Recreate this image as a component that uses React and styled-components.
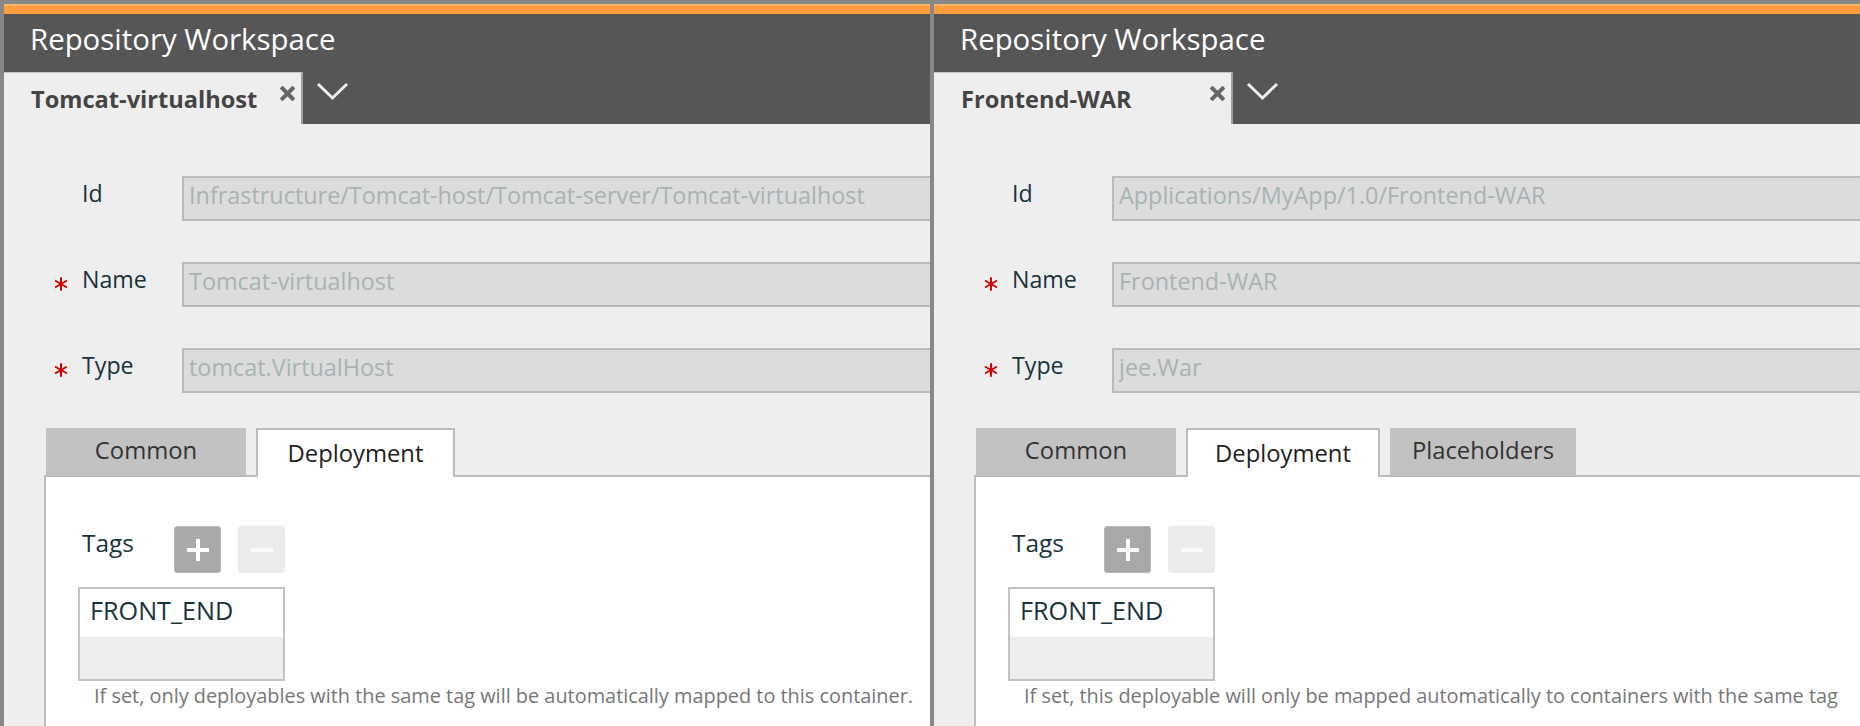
import React from "react";
import styled, { createGlobalStyle } from "styled-components";

const GlobalStyle = createGlobalStyle`
  html, body {
    margin: 0;
    padding: 0;
    background: #888888;
  }
  * {
    box-sizing: border-box;
  }
`;

const FONT = `"Open Sans", "Liberation Sans", sans-serif`;

const Page = styled.div`
  display: flex;
  width: 1860px;
  height: 726px;
  overflow: hidden;
  background: #888888;
  font-family: ${FONT};
`;

// One repository workspace window
const Panel = styled.section`
  flex: 0 0 930px;
  display: flex;
  flex-direction: column;
  border-left: 4px solid #888888;
  border-top: 4px solid #888888;
  background: #eeeeee;
  overflow: hidden;
  min-width: 0;
`;

const Accent = styled.div`
  height: 10px;
  flex: 0 0 auto;
  background: #ff9d3a;
  border-top: 2px solid #ffb76e;
`;

const Header = styled.header`
  flex: 0 0 110px;
  display: flex;
  flex-direction: column;
  background: #565656;
`;

const Title = styled.div`
  height: 58px;
  padding: 5px 0 0 26px;
  font-size: 29.4px;
  line-height: 40px;
  color: #ffffff;
  white-space: nowrap;
`;

const DocTabs = styled.div`
  display: flex;
  height: 52px;
`;

const DocTab = styled.div`
  width: 299px;
  height: 52px;
  display: flex;
  align-items: flex-start;
  padding: 0 6px 0 27px;
  background: #eeeeee;
  border-top: 1px solid #c6c6c6;
  border-right: 2px solid #9e9e9e;
`;

const DocTabLabel = styled.span`
  margin-top: 8px;
  font-size: 23.6px;
  line-height: 36px;
  font-weight: 700;
  color: #444444;
  white-space: nowrap;
`;

const CloseIcon = styled.svg`
  margin: 13px 0 0 auto;
  flex: 0 0 auto;
`;

const Chevron = styled.svg`
  margin: 10px 0 0 13px;
  flex: 0 0 auto;
`;

const Body = styled.div`
  flex: 1;
  display: flex;
  flex-direction: column;
  padding-top: 52px;
  min-height: 0;
`;

const FieldRow = styled.div`
  display: flex;
  align-items: center;
  height: 45px;
  margin-bottom: ${({ last }) => (last ? "35px" : "41px")};
  padding-left: 50px;
`;

const Required = styled.span`
  flex: 0 0 28px;
  display: flex;
  align-items: center;
  margin-bottom: 2px;
`;

const FieldLabel = styled.label`
  flex: 0 0 100px;
  font-size: 23.2px;
  color: #17343d;
  margin-bottom: 12px;
`;

const ReadOnlyInput = styled.input`
  flex: 0 0 820px;
  width: 820px;
  height: 45px;
  padding: 0 0 7px 5px;
  border: 2px solid #b8bbbe;
  background: #dcdcdc;
  font-family: ${FONT};
  font-size: 23.4px;
  color: #a9b3b3;
  outline: none;
`;

const FormTabs = styled.div`
  flex: 1;
  display: flex;
  flex-direction: column;
  margin: 0 -40px 0 40px;
  min-height: 0;
`;

const FormTabStrip = styled.div`
  display: flex;
  align-items: flex-start;
  gap: 10px;
  padding-left: 2px;
  height: 47px;
  position: relative;
  z-index: 1;
`;

const FormTab = styled.div`
  flex: 0 0 ${({ w }) => w}px;
  height: ${({ active }) => (active ? "49px" : "47px")};
  display: flex;
  justify-content: center;
  padding-top: ${({ active }) => (active ? "8px" : "7px")};
  font-size: 23.8px;
  line-height: 30px;
  color: ${({ active }) => (active ? "#222222" : "#333333")};
  background: ${({ active }) => (active ? "#ffffff" : "#c2c2c2")};
  border: ${({ active }) => (active ? "2px solid #bdbdbd" : "none")};
  border-bottom: none;
  white-space: nowrap;
`;

const TabPanel = styled.div`
  flex: 1;
  background: #ffffff;
  border-top: 2px solid #bdbdbd;
  border-left: 2px solid #bdbdbd;
  padding: 49px 0 0 36px;
`;

const TagsRow = styled.div`
  display: flex;
  align-items: center;
`;

const TagsLabel = styled.span`
  flex: 0 0 92px;
  font-size: 24.4px;
  color: #17343d;
  margin-bottom: 14px;
`;

const SquareButton = styled.button`
  width: 47px;
  height: 47px;
  margin-right: 17px;
  padding: 0;
  display: flex;
  align-items: center;
  justify-content: center;
  border: 1px solid ${({ disabled }) => (disabled ? "#eaeaea" : "#b8b8b8")};
  border-radius: 3px;
  background: ${({ disabled }) => (disabled ? "#ececec" : "#a8a8a8")};
`;

const TagList = styled.ul`
  list-style: none;
  margin: 14px 0 0 -4px;
  padding: 0;
  width: 207px;
  height: 94px;
  border: 2px solid #c2c2c2;
  background: #eeeeee;
`;

const TagItem = styled.li`
  height: 48px;
  padding-left: 10px;
  background: #ffffff;
  font-size: 25.2px;
  line-height: 42px;
  color: #17343d;
`;

const HelpText = styled.p`
  margin: 3px 0 0 12px;
  font-size: 19.9px;
  line-height: 24px;
  color: #777777;
  white-space: nowrap;
`;

const Asterisk = () => (
  <svg width="14" height="14" viewBox="0 0 14 14">
    <g stroke="#d40000" strokeWidth="2" strokeLinecap="round">
      <line x1="7" y1="1" x2="7" y2="13" />
      <line x1="1.8" y1="4" x2="12.2" y2="10" />
      <line x1="1.8" y1="10" x2="12.2" y2="4" />
    </g>
  </svg>
);

const Plus = ({ color }) => (
  <svg width="24" height="24" viewBox="0 0 24 24">
    <path d="M12 1v22M1 12h22" stroke={color} strokeWidth="4" />
  </svg>
);

const Minus = ({ color }) => (
  <svg width="24" height="24" viewBox="0 0 24 24">
    <path d="M1 12h22" stroke={color} strokeWidth="4" />
  </svg>
);

const panels = [
  {
    name: "Tomcat-virtualhost",
    id: "Infrastructure/Tomcat-host/Tomcat-server/Tomcat-virtualhost",
    type: "tomcat.VirtualHost",
    tabs: [
      { label: "Common", w: 200 },
      { label: "Deployment", w: 199, active: true },
    ],
    help: "If set, only deployables with the same tag will be automatically mapped to this container.",
  },
  {
    name: "Frontend-WAR",
    id: "Applications/MyApp/1.0/Frontend-WAR",
    type: "jee.War",
    tabs: [
      { label: "Common", w: 200 },
      { label: "Deployment", w: 194, active: true },
      { label: "Placeholders", w: 186 },
    ],
    help: "If set, this deployable will only be mapped automatically to containers with the same tag",
  },
];

function Workspace({ item }) {
  const fields = [
    { label: "Id", value: item.id },
    { label: "Name", value: item.name, required: true },
    { label: "Type", value: item.type, required: true },
  ];

  return (
    <Panel>
      <Accent />
      <Header>
        <Title>Repository Workspace</Title>
        <DocTabs>
          <DocTab>
            <DocTabLabel>{item.name}</DocTabLabel>
            <CloseIcon width="15" height="15" viewBox="0 0 15 15">
              <path d="M2.5 2.5l10 10M12.5 2.5l-10 10" stroke="#666666" strokeWidth="4" strokeLinecap="square" />
            </CloseIcon>
          </DocTab>
          <Chevron width="33" height="19" viewBox="0 0 33 19">
            <polyline points="2,2 16.5,16 31,2" fill="none" stroke="#eeeeee" strokeWidth="3" />
          </Chevron>
        </DocTabs>
      </Header>
      <Body>
        {fields.map((f, i) => (
          <FieldRow key={f.label} last={i === fields.length - 1}>
            <Required>{f.required && <Asterisk />}</Required>
            <FieldLabel>{f.label}</FieldLabel>
            <ReadOnlyInput readOnly value={f.value} />
          </FieldRow>
        ))}
        <FormTabs>
          <FormTabStrip>
            {item.tabs.map((t) => (
              <FormTab key={t.label} w={t.w} active={t.active}>
                {t.label}
              </FormTab>
            ))}
          </FormTabStrip>
          <TabPanel>
            <TagsRow>
              <TagsLabel>Tags</TagsLabel>
              <SquareButton type="button">
                <Plus color="#ffffff" />
              </SquareButton>
              <SquareButton type="button" disabled>
                <Minus color="#fafafa" />
              </SquareButton>
            </TagsRow>
            <TagList>
              <TagItem>FRONT_END</TagItem>
            </TagList>
            <HelpText>{item.help}</HelpText>
          </TabPanel>
        </FormTabs>
      </Body>
    </Panel>
  );
}

export default function App() {
  return (
    <Page>
      <GlobalStyle />
      {panels.map((p) => (
        <Workspace key={p.name} item={p} />
      ))}
    </Page>
  );
}
